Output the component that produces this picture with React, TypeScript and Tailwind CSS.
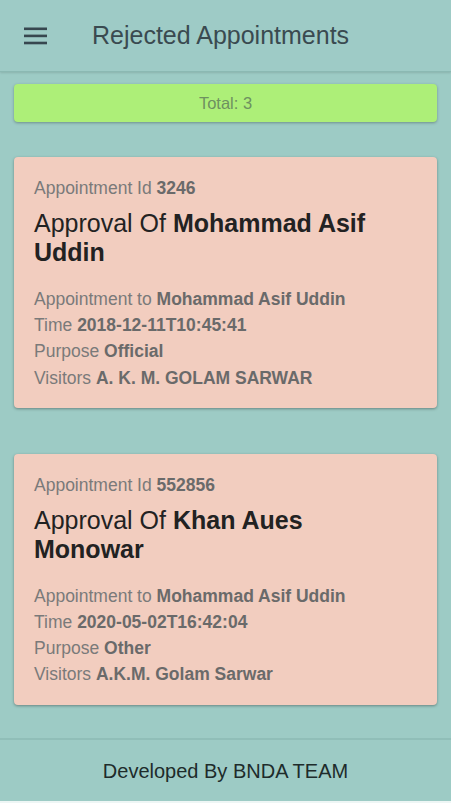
const appointments = [
  {
    id: "3246",
    name: "Mohammad Asif Uddin",
    to: "Mohammad Asif Uddin",
    time: "2018-12-11T10:45:41",
    purpose: "Official",
    visitors: "A. K. M. GOLAM SARWAR",
  },
  {
    id: "552856",
    name: "Khan Aues Monowar",
    to: "Mohammad Asif Uddin",
    time: "2020-05-02T16:42:04",
    purpose: "Other",
    visitors: "A.K.M. Golam Sarwar",
  },
];

type Appointment = (typeof appointments)[number];

const Row = ({ label, value }: { label: string; value: string }) => (
  <p className="text-[17.5px] leading-[26.25px] text-[#7a7a7a]">
    {label} <span className="font-bold text-[#6a6a6a]">{value}</span>
  </p>
);

const AppointmentCard = ({ data }: { data: Appointment }) => {
  return (
    <div className="mx-[14px] rounded-[4px] bg-[#f2cdbf] px-5 pt-[18px] pb-[17px] shadow-[0_1px_3px_rgba(0,0,0,0.35)]">
      <Row label="Appointment Id" value={data.id} />
      <h2 className="mt-2 pr-4 text-[25px] leading-[28.75px] text-[#222222]">
        Approval Of <span className="font-bold">{data.name}</span>
      </h2>
      <div className="mt-[19px]">
        <Row label="Appointment to" value={data.to} />
        <Row label="Time" value={data.time} />
        <Row label="Purpose" value={data.purpose} />
        <Row label="Visitors" value={data.visitors} />
      </div>
    </div>
  );
};

export default function App() {
  return (
    <div
      className="flex h-[803px] w-full flex-col bg-[#9dcbc5]"
      style={{ fontFamily: '"Liberation Sans", Arial, sans-serif' }}
    >
      <header className="flex h-[72px] shrink-0 items-center border-b border-[#8bb9b3] bg-[#9ecbc6] shadow-[0_1px_2px_rgba(0,0,0,0.12)]">
        <svg width="23" height="18" viewBox="0 0 23 18" className="ml-6" fill="#37474f">
          <rect x="0" y="0.5" width="23" height="2.6" />
          <rect x="0" y="7.6" width="23" height="2.6" />
          <rect x="0" y="14.7" width="23" height="2.6" />
        </svg>
        <h1 className="ml-[45px] text-[25px] text-[#3a4a50]">Rejected Appointments</h1>
      </header>

      <main className="flex-1">
        <div className="mx-[14px] mt-3 flex h-[38px] items-center justify-center rounded-[4px] bg-[#adef78] text-[16.5px] text-[#6e9160] shadow-[0_1px_3px_rgba(0,0,0,0.3)]">
          Total: 3
        </div>
        <div className="mt-[35px] flex flex-col gap-[46px]">
          {appointments.map((a) => (
            <AppointmentCard key={a.id} data={a} />
          ))}
        </div>
      </main>

      <footer className="flex h-[63px] shrink-0 items-center justify-center border-t-2 border-[#90beb8] text-[20px] text-[#1e2b2b]">
        Developed By BNDA TEAM
      </footer>
      <div className="h-[2px] shrink-0 bg-[#eef6f5]" />
    </div>
  );
}
